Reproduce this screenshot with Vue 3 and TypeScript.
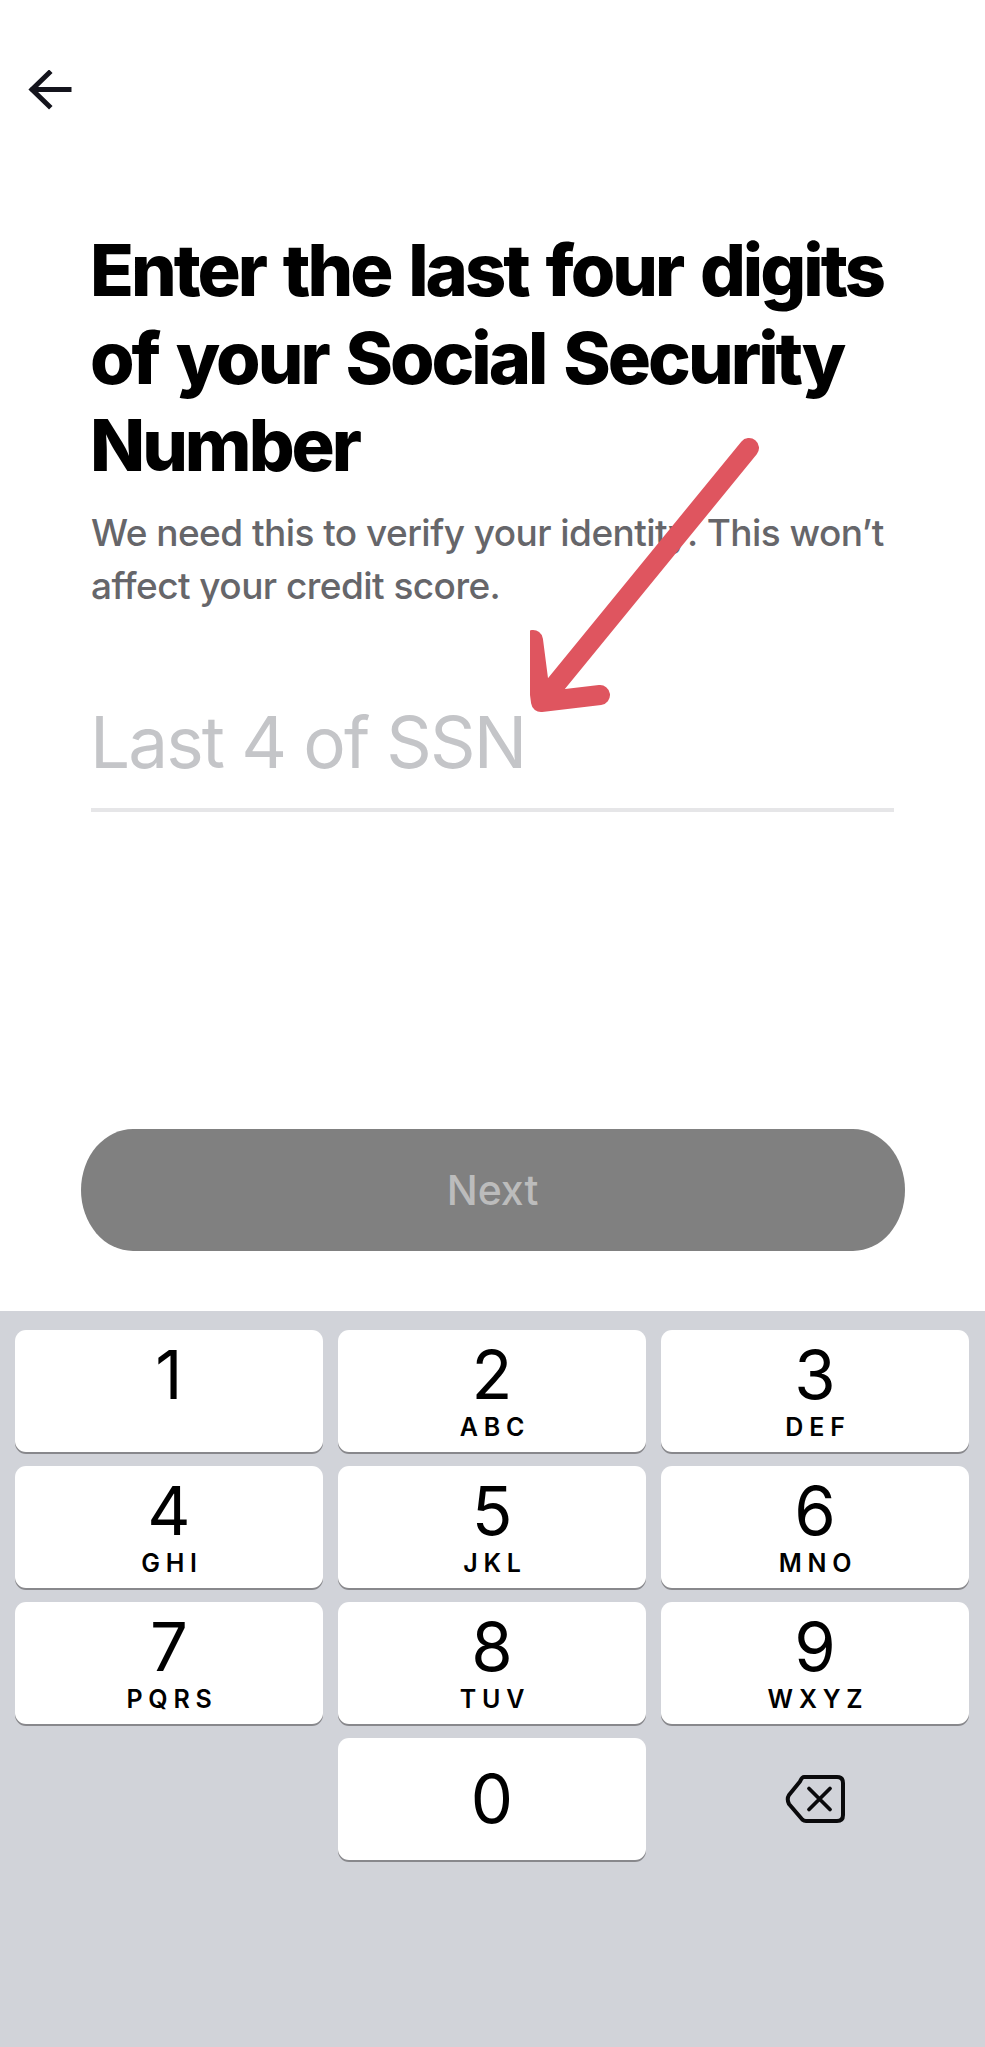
<script setup lang="ts">
interface Key {
  digit: string
  letters: string
}

const keys: Key[] = [
  { digit: '1', letters: '' },
  { digit: '2', letters: 'ABC' },
  { digit: '3', letters: 'DEF' },
  { digit: '4', letters: 'GHI' },
  { digit: '5', letters: 'JKL' },
  { digit: '6', letters: 'MNO' },
  { digit: '7', letters: 'PQRS' },
  { digit: '8', letters: 'TUV' },
  { digit: '9', letters: 'WXYZ' },
]
</script>

<template>
  <div class="page">
    <header class="topbar">
      <svg class="back" width="44" height="40" viewBox="0 0 44 40" fill="none">
        <path d="M41 19.500H5M21 3 4 19.500 21 36" stroke="#14141c" stroke-width="5" stroke-linecap="square" stroke-linejoin="miter" />
      </svg>
    </header>

    <main class="content">
      <h1 class="title">Enter the last four digits of your Social Security Number</h1>
      <p class="subtitle">We need this to verify your identity. This won’t affect your credit score.</p>
      <div class="field"><span class="placeholder">Last 4 of SSN</span></div>
    </main>

    <button class="next" type="button">Next</button>

    <section class="keyboard">
      <div class="keys">
        <div v-for="key in keys" :key="key.digit" class="key">
          <span class="digit">{{ key.digit }}</span>
          <span class="letters">{{ key.letters }}</span>
        </div>
        <div class="key zero">
          <span class="digit">0</span>
        </div>
        <div class="delete">
          <svg width="60" height="50" viewBox="0 0 60 50" fill="none">
            <path d="M19 3H52Q58 3 58 9V41Q58 47 52 47H21Q19 47 17.500 45.700L4 30Q1.500 25 4 21L15 7.500Q17 3 19 3Z" stroke="#0a0a0c" stroke-width="4" stroke-linejoin="round" />
            <path d="M24 14.500 45 35.500M45 14.500 24 35.500" stroke="#0a0a0c" stroke-width="3.800" stroke-linecap="round" />
          </svg>
        </div>
      </div>
    </section>

    <svg class="annotation" width="240" height="290" viewBox="0 0 240 290" fill="none">
      <path d="M219 12 13 264M3 204 11 266 70 259" stroke="#df555f" stroke-width="20" stroke-linecap="round" stroke-linejoin="round" />
    </svg>
  </div>
</template>

<style>
html,
body {
  margin: 0;
  background: #fff;
}
</style>

<style scoped>
.page {
  position: relative;
  display: flex;
  flex-direction: column;
  height: 2047px;
  background: #fff;
  font-family: Inter, "Liberation Sans", sans-serif;
  overflow: hidden;
}

.topbar {
  padding: 70px 0 0 28px;
  height: 156px;
  box-sizing: border-box;
}

.back {
  display: block;
}

.content {
  padding: 70px 91px 0;
}

.title {
  margin: 0 -20px 0 -1px;
  font-size: 72px;
  line-height: 87.500px;
  font-weight: 800;
  letter-spacing: -3px;
  word-spacing: 5px;
  color: #000;
}

.subtitle {
  margin: 17px 0 0;
  font-size: 37px;
  line-height: 53px;
  font-weight: 500;
  letter-spacing: -0.550px;
  color: #66666a;
}

.field {
  margin-top: 85px;
  padding-bottom: 21px;
  border-bottom: 4px solid #e6e6e8;
  font-size: 71px;
  line-height: 90px;
  font-weight: 400;
  letter-spacing: -1.900px;
  color: #c4c5c8;
}

.placeholder {
  margin-left: -1px;
}

.next {
  flex: none;
  align-self: center;
  width: 824px;
  height: 122px;
  margin-top: 317px;
  padding: 0;
  border: none;
  border-radius: 52px / 61px;
  background: #808080;
  color: #bcbcbc;
  font-family: inherit;
  font-size: 41px;
  font-weight: 500;
}

.keyboard {
  flex: 1;
  margin-top: 60px;
  padding: 19px 16px 0 15px;
  background: #d1d3d9;
}

.keys {
  display: grid;
  grid-template-columns: repeat(3, 308px);
  grid-auto-rows: 122px;
  gap: 14px 15px;
}

.key {
  display: flex;
  flex-direction: column;
  align-items: center;
  border-radius: 11px;
  background: #fff;
  box-shadow: 0 2px 0 #88888c;
  color: #000;
}

.digit {
  margin-top: 7px;
  font-size: 67px;
  line-height: 76px;
  font-weight: 400;
}

.letters {
  margin-top: 0;
  margin-right: -6px;
  font-size: 25px;
  line-height: 28px;
  font-weight: 600;
  letter-spacing: 5.800px;
}

.zero {
  grid-column: 2;
  justify-content: center;
}

.zero .digit {
  margin-top: 0;
}

.delete {
  display: flex;
  align-items: center;
  justify-content: center;
}

.annotation {
  position: absolute;
  left: 530px;
  top: 436px;
}
</style>
